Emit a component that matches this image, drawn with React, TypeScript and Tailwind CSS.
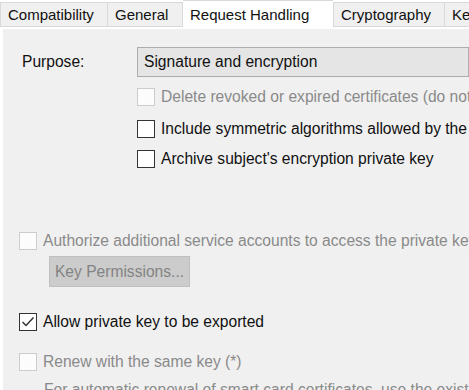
import React from "react";

function Box({ checked = false, disabled = false }: { checked?: boolean; disabled?: boolean }) {
  return (
    <div
      className={
        "w-[18px] h-[18px] shrink-0 border flex items-center justify-center " +
        (disabled ? "border-[#cccccc] bg-[#fcfcfc]" : "border-[#333333] bg-white")
      }
    >
      {checked && (
        <svg width="16" height="16" viewBox="0 0 16 16">
          <polyline points="2.5,8 6,11.5 13.5,3.5" fill="none" stroke="#333333" strokeWidth="1.5" />
        </svg>
      )}
    </div>
  );
}

function Check({
  label,
  checked = false,
  disabled = false,
  className = "",
}: {
  label: string;
  checked?: boolean;
  disabled?: boolean;
  className?: string;
}) {
  return (
    <div className={"flex items-center h-[19px] gap-[6px] " + className}>
      <Box checked={checked} disabled={disabled} />
      <span className={disabled ? "text-[#8a8a8a]" : "text-[#111111]"}>{label}</span>
    </div>
  );
}

export default function App() {
  const tab = "h-[25px] mt-[2px] flex items-center border border-[#d9d9d9] bg-[#f0f0f0] px-[7px] pt-[1px] shrink-0";
  return (
    <div
      className="w-[469px] h-[390px] overflow-hidden bg-white whitespace-nowrap text-[15.6px] leading-[18px] text-[#111111]"
      style={{ fontFamily: '"Liberation Sans", Arial, sans-serif' }}
    >
      <div className="flex h-[28px] items-start text-[15px]">
        <div className={tab + " w-[107px] border-r-0"}>Compatibility</div>
        <div className={tab + " w-[76px]"}>General</div>
        <div className="h-[28px] w-[150px] shrink-0 bg-white flex items-center px-[7px] border-t border-[#d9d9d9]">
          Request Handling
        </div>
        <div className={tab + " w-[111px] border-r-0"}>Cryptography</div>
        <div className={tab + " w-[40px]"}>Key Attestation</div>
      </div>
      <div className="ml-[3px] mt-[1px] bg-[#f0f0f0] h-[361px] flex flex-col">
        <div className="flex items-center mt-[18px] h-[30px]">
          <div className="w-[134px] pl-[19px]">Purpose:</div>
          <div className="flex-1 h-[30px] border border-[#adadad] bg-[#e5e5e5] flex items-center pl-[6px]">
            Signature and encryption
          </div>
        </div>
        <div className="pl-[134px] flex flex-col">
          <Check className="mt-[10px]" disabled label="Delete revoked or expired certificates (do not archive)" />
          <Check className="mt-[13px]" label="Include symmetric algorithms allowed by the subject" />
          <Check className="mt-[11px]" label="Archive subject's encryption private key" />
        </div>
        <div className="pl-[16px] flex flex-col">
          <Check className="mt-[63px]" disabled label="Authorize additional service accounts to access the private key" />
          <div className="ml-[30px] mt-[6px] w-[141px] h-[31px] border border-[#bfbfbf] bg-[#cccccc] text-[#838383] flex items-center justify-center">
            Key Permissions...
          </div>
          <Check className="mt-[25px]" checked label="Allow private key to be exported" />
          <Check className="mt-[21px]" disabled label="Renew with the same key (*)" />
          <div className="mt-[10px] pl-[25px] text-[#8a8a8a]">
            For automatic renewal of smart card certificates, use the existing key if a new key cannot be created
          </div>
        </div>
      </div>
    </div>
  );
}
